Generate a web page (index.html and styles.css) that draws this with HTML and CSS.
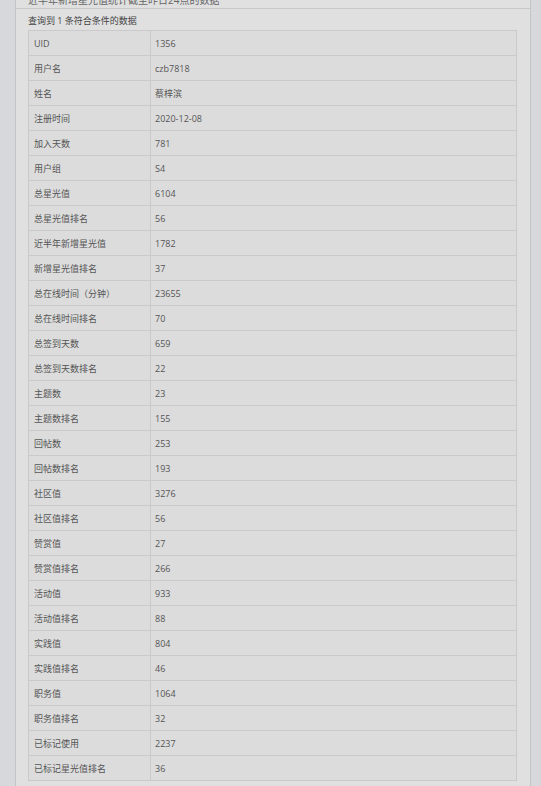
FILE: index.html
```html
<!DOCTYPE html>
<html lang="zh">
<head>
<meta charset="utf-8">
<link rel="stylesheet" href="styles.css">
</head>
<body>
<div class="panel">
  <div class="panel-head"><span class="head-text">近半年新增星光值统计截至昨日24点的数据</span></div>
  <div class="panel-body">
    <div class="summary">查询到 1 条符合条件的数据</div>
    <table class="data">
      <tr><td class="k">UID</td><td>1356</td></tr>
      <tr><td class="k">用户名</td><td>czb7818</td></tr>
      <tr><td class="k">姓名</td><td>蔡梓滨</td></tr>
      <tr><td class="k">注册时间</td><td>2020-12-08</td></tr>
      <tr><td class="k">加入天数</td><td>781</td></tr>
      <tr><td class="k">用户组</td><td>S4</td></tr>
      <tr><td class="k">总星光值</td><td>6104</td></tr>
      <tr><td class="k">总星光值排名</td><td>56</td></tr>
      <tr><td class="k">近半年新增星光值</td><td>1782</td></tr>
      <tr><td class="k">新增星光值排名</td><td>37</td></tr>
      <tr><td class="k">总在线时间（分钟）</td><td>23655</td></tr>
      <tr><td class="k">总在线时间排名</td><td>70</td></tr>
      <tr><td class="k">总签到天数</td><td>659</td></tr>
      <tr><td class="k">总签到天数排名</td><td>22</td></tr>
      <tr><td class="k">主题数</td><td>23</td></tr>
      <tr><td class="k">主题数排名</td><td>155</td></tr>
      <tr><td class="k">回帖数</td><td>253</td></tr>
      <tr><td class="k">回帖数排名</td><td>193</td></tr>
      <tr><td class="k">社区值</td><td>3276</td></tr>
      <tr><td class="k">社区值排名</td><td>56</td></tr>
      <tr><td class="k">赞赏值</td><td>27</td></tr>
      <tr><td class="k">赞赏值排名</td><td>266</td></tr>
      <tr><td class="k">活动值</td><td>933</td></tr>
      <tr><td class="k">活动值排名</td><td>88</td></tr>
      <tr><td class="k">实践值</td><td>804</td></tr>
      <tr><td class="k">实践值排名</td><td>46</td></tr>
      <tr><td class="k">职务值</td><td>1064</td></tr>
      <tr><td class="k">职务值排名</td><td>32</td></tr>
      <tr><td class="k">已标记使用</td><td>2237</td></tr>
      <tr><td class="k">已标记星光值排名</td><td>36</td></tr>
    </table>
  </div>
</div>
</body>
</html>
```
FILE: styles.css
```css
html, body {
  margin: 0;
  padding: 0;
  background: #d7d8dc;
  font-family: "Open Sans", "Noto Sans CJK SC", sans-serif;
  font-size: 9px;
  color: #555;
}
.panel {
  margin-left: 15px;
  width: 514px;
  border-left: 1px solid #c4c4c4;
  border-right: 1px solid #c4c4c4;
  background: #e0e0e0;
  min-height: 786px;
}
.panel-head {
  height: 8px;
  border-bottom: 1px solid #c8c8c8;
  overflow: hidden;
  position: relative;
}
.head-text {
  position: absolute;
  left: 12px;
  top: -6px;
  font-size: 10px;
  line-height: 12px;
  color: #666;
}
.panel-body {
  padding: 0 13px 0 12px;
}
.summary {
  height: 21px;
  line-height: 23px;
  color: #444;
}
.data {
  width: 489px;
  border-collapse: collapse;
  background: #dcdcdc;
}
.data td {
  border: 1px solid #cacaca;
  height: 24px;
  padding: 1px 0 0 4px;
  line-height: 23px;
  vertical-align: middle;
  box-sizing: border-box;
}
.data tr {
  height: 25px;
}
.data td.k {
  width: 122px;
  padding-left: 5px;
}
```
